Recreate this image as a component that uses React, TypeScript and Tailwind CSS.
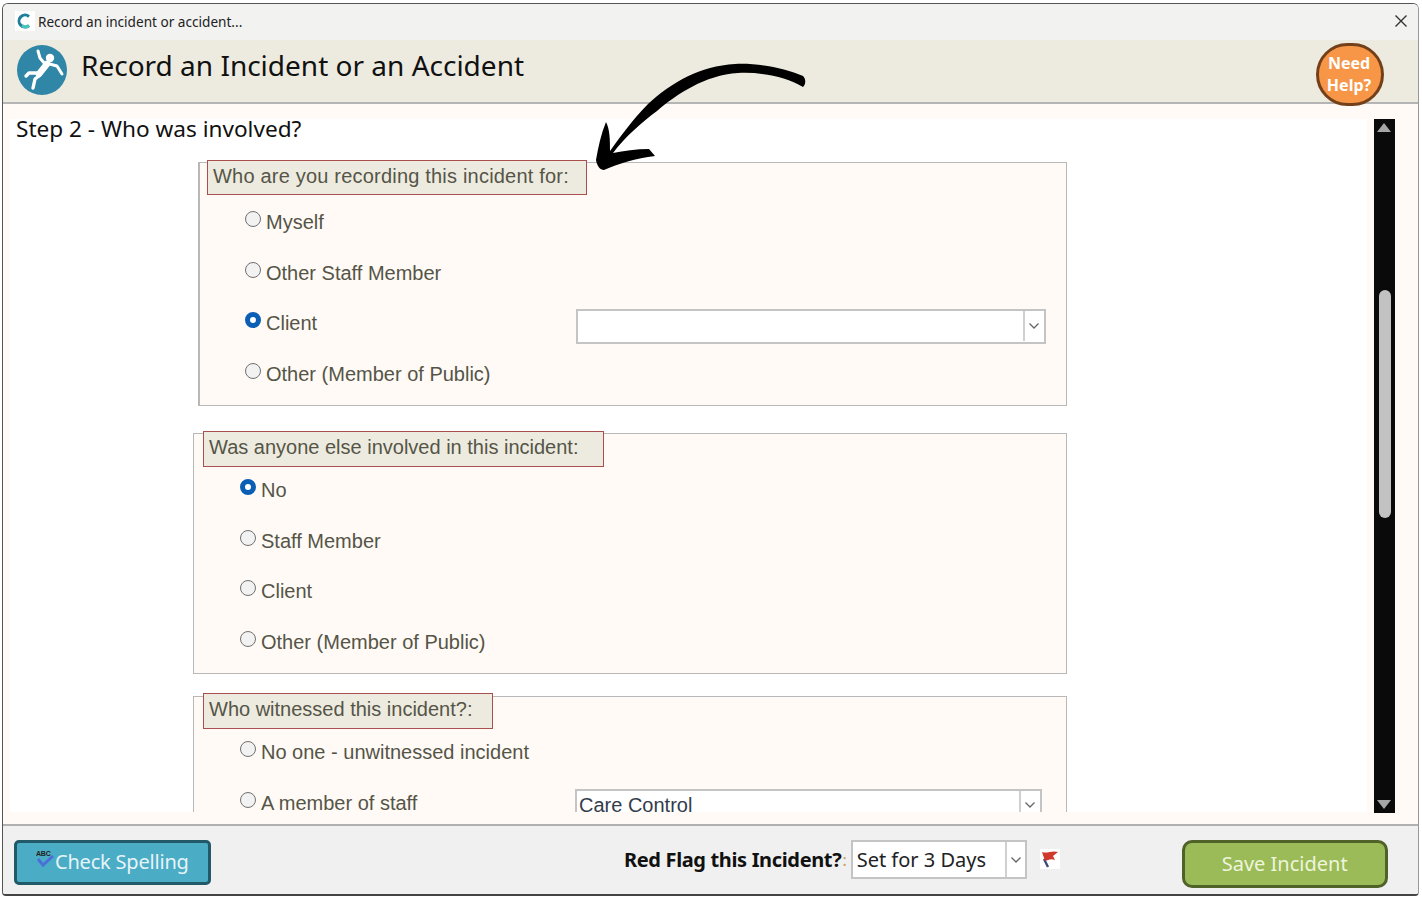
import React from 'react';

const Radio: React.FC<{ checked?: boolean }> = ({ checked }) =>
  checked ? (
    <span className="block w-4 h-4 -mt-[6px] mr-[5px] shrink-0 rounded-full border-[5px] border-[#0a5fb4] bg-white" />
  ) : (
    <span className="block w-4 h-4 -mt-[6px] mr-[5px] shrink-0 rounded-full border border-[#707070] bg-[#f2f2f2]" />
  );

const Chevron = () => (
  <svg width="12" height="8" viewBox="0 0 12 8" fill="none" stroke="#666" strokeWidth="1.3">
    <path d="M1.5 1.5 L6 6 L10.5 1.5" />
  </svg>
);

const Row: React.FC<{ label: string; checked?: boolean; labelClass?: string; children?: React.ReactNode }> = ({
  label,
  checked,
  labelClass = 'w-[331px]',
  children,
}) => (
  <div className="flex items-center h-[50.6px]">
    <div className={`flex items-center shrink-0 ${labelClass}`}>
      <Radio checked={checked} />
      <span>{label}</span>
    </div>
    {children}
  </div>
);

const Legend: React.FC<{ text: string; className: string }> = ({ text, className }) => (
  <div className={`flex items-center bg-[#edebe0] border border-[#a94f4f] pl-[5px] pb-[4px] ${className}`}>
    {text}
  </div>
);

const PersonFalling = () => (
  <svg width="50" height="50" viewBox="0 0 50 50" className="shrink-0">
    <circle cx="25" cy="25" r="25" fill="#2f86a6" />
    <circle cx="33" cy="13" r="4.2" fill="white" />
    <g fill="none" stroke="white" strokeLinecap="round" strokeLinejoin="round">
      <path d="M21 6 L23 13 L28 19" strokeWidth="3" />
      <path d="M29 18 L40 21 L45 29" strokeWidth="3" />
      <path d="M30 19 L22 29" strokeWidth="6.5" />
      <path d="M22 28 L12 28 L9 31" strokeWidth="3.4" />
      <path d="M23 30 L18 34 L16 43" strokeWidth="3.4" />
    </g>
  </svg>
);

const Arrow = () => (
  <svg className="absolute left-[590px] top-[60px] z-20" width="220" height="115" viewBox="590 60 220 115">
    <path
      fill="black"
      d="M803 76 C785 68 760 63 735 64 C700 66 672 82 648 104 C632 120 618 140 610 151 C610 140 610 130 606 122 C601 134 598 148 596 160 C597 166 600 170 604 170 C618 164 636 158 655 156 L649 149 C636 149 624 151 613 153 C625 137 642 122 657 111 C677 94 705 75 738 73 C760 72 785 76 803 87 C806 84 806 79 803 76 Z"
    />
  </svg>
);

export default function App() {
  return (
    <div className="relative w-[1422px] h-[897px] bg-white pt-[3px] pr-[3px] pb-[1px] pl-[2px] overflow-hidden font-['Liberation_Sans',sans-serif]">
      <div className="flex flex-col h-full rounded-t-[6px] rounded-b-[4px] border-t border-l border-[#555] border-r border-r-[#999] border-b-2 border-b-[#444] overflow-hidden">
        {/* title bar */}
        <div className="flex items-center h-[36px] shrink-0 bg-[#f2f3f1] pl-[12px] pr-[10px] font-['Noto_Sans',sans-serif] text-[13.6px] text-[#222]">
          <svg width="20" height="20" viewBox="0 0 20 20" className="mr-[3px] -mt-[2px] bg-white">
            <path d="M14 5.5 A6 6 0 1 0 14 14.5" fill="none" stroke="#1f7f9c" strokeWidth="3" />
            <path d="M7 14.5 A6 6 0 0 0 14 14.5" fill="none" stroke="#45c7bd" strokeWidth="3" />
          </svg>
          <span>Record an incident or accident...</span>
          <svg className="ml-auto -mt-[2px]" width="14" height="14" viewBox="0 0 14 14" stroke="#333" strokeWidth="1.4">
            <path d="M1.5 1.5 L12.5 12.5 M12.5 1.5 L1.5 12.5" />
          </svg>
        </div>

        {/* header */}
        <div className="relative z-10 flex items-start h-[64px] shrink-0 bg-[#edebe0] border-b-2 border-[#b5b5b5] pl-[14px] pr-[34px] font-['Noto_Sans',sans-serif]">
          <div className="mt-[5px] mr-[14px]">
            <PersonFalling />
          </div>
          <span className="mt-[3px] text-[28px] leading-[44px] text-[#111]">
            Record an Incident or an Accident
          </span>
          <div className="ml-auto mt-[3px] flex items-center justify-center w-[68px] h-[63px] shrink-0 rounded-full bg-[#f79646] border-[3px] border-[#74401a] pb-[2px] pr-[2px] text-white text-[16px] leading-[22px] font-bold text-center">
            Need
            <br />
            Help?
          </div>
        </div>

        {/* body */}
        <div className="flex flex-1 min-h-0 bg-[#fffaf6] pt-[15px] pb-[11px] pl-[7px]">
          <div className="w-[1357px] shrink-0 mb-[1px] bg-white overflow-hidden text-[20px] text-[#555547]">
            <div className="pl-[6px] h-[27px] mb-[16px] font-['Noto_Sans',sans-serif] text-[22.6px] leading-[20px] text-[#111]">
              Step 2 - Who was involved?
            </div>

            <div className="ml-[188px] w-[869px] h-[244px] border border-[#b8b8b8] border-l-2 bg-[#fffaf6] pl-[45px]">
              <Legend
                text="Who are you recording this incident for:"
                className="w-[380px] h-[35px] -ml-[38px] -mt-[3px] mb-[2px] tracking-[0.2px]"
              />
              <Row label="Myself" />
              <Row label="Other Staff Member" />
              <Row label="Client" checked>
                <div className="flex justify-end items-center w-[470px] h-[35px] mt-[6px] bg-white border-2 border-[#c4c4c4] pr-[1px]">
                  <span className="flex items-center justify-center w-[20px] h-[30px] border-l-2 border-[#d0d0d0]">
                    <Chevron />
                  </span>
                </div>
              </Row>
              <Row label="Other (Member of Public)" />
            </div>

            <div className="mt-[27px] ml-[183px] w-[874px] h-[241px] border border-[#b8b8b8] bg-[#fffaf6] pl-[46px]">
              <Legend
                text="Was anyone else involved in this incident:"
                className="w-[401px] h-[36px] -ml-[37px] -mt-[3px] mb-[-2px]"
              />
              <Row label="No" checked />
              <Row label="Staff Member" />
              <Row label="Client" />
              <Row label="Other (Member of Public)" />
            </div>

            <div className="mt-[22px] ml-[183px] w-[874px] h-[200px] border border-[#b8b8b8] bg-[#fffaf6] pl-[46px]">
              <Legend
                text="Who witnessed this incident?:"
                className="w-[290px] h-[36px] -ml-[37px] -mt-[4px] mb-[-2px]"
              />
              <Row label="No one - unwitnessed incident" />
              <Row label="A member of staff" labelClass="w-[335px]">
                <div className="flex justify-between items-start w-[467px] h-[35px] mt-[8px] bg-white border-2 border-[#c4c4c4] pl-[2px] pr-[1px] pt-[5px] leading-[18px] text-[#333c4a]">
                  Care Control
                  <span className="flex items-center justify-center w-[20px] h-[27px] -mt-[5px] border-l-2 border-[#d0d0d0]">
                    <Chevron />
                  </span>
                </div>
              </Row>
            </div>
          </div>

          {/* scrollbar */}
          <div className="relative w-[21px] ml-[7px] shrink-0 bg-[#0a0a0a]">
            <span className="absolute left-[3px] top-[4px] w-0 h-0 border-l-[7px] border-r-[7px] border-b-[9px] border-l-transparent border-r-transparent border-b-[#a6a6a6]" />
            <span className="absolute left-[5px] top-[171px] w-[12px] h-[228px] rounded-full bg-[#c2c2c2]" />
            <span className="absolute left-[3px] bottom-[4px] w-0 h-0 border-l-[7px] border-r-[7px] border-t-[9px] border-l-transparent border-r-transparent border-t-[#a6a6a6]" />
          </div>
        </div>

        {/* footer */}
        <div className="flex items-start h-[70px] shrink-0 bg-[#f0f0f0] border-t-2 border-[#b0b0b0] pt-[14px] pl-[11px] font-['Noto_Sans',sans-serif]">
          <div className="flex items-center w-[197px] h-[45px] rounded-[5px] bg-[#4bacc6] border-[3px] border-[#215968] text-[#e6f4f8] text-[20px] tracking-[-0.2px] pl-[18px] pb-[1px] shrink-0">
            <svg width="20" height="24" viewBox="0 0 20 24" className="-mt-[4px] shrink-0">
              <text x="1" y="8" fontSize="7" fontWeight="700" fill="#222" fontFamily="Liberation Sans, sans-serif">ABC</text>
              <path d="M3 11 L8 17 L18 8" fill="none" stroke="#4a6fd8" strokeWidth="3" />
            </svg>
            Check Spelling
          </div>
          <div className="flex items-center ml-[413px]">
            <span className="text-[20px] font-bold text-[#111] tracking-[-0.35px] whitespace-nowrap">Red Flag this Incident?</span>
            <span className="text-[16px] text-[#c99a5a] ml-[1px] mr-[4px]">:</span>
            <div className="flex items-center justify-between w-[176px] h-[39px] bg-white border-2 border-[#c4c4c4] pl-[4px] text-[20px] text-[#222]">
              Set for 3 Days
              <span className="flex items-center justify-center w-[20px] h-full border-l-2 border-[#d0d0d0]">
                <Chevron />
              </span>
            </div>
            <svg width="20" height="20" viewBox="0 0 20 20" className="ml-[13px] -mt-[1px] bg-white">
              <path d="M8 18 L4 10" stroke="#3c4a7a" strokeWidth="2.4" />
              <path d="M2 3 C7 5 12 1 18 3 L13 7 L15 11 C11 9 8 11 5 12 Z" fill="#cf3a2c" />
            </svg>
          </div>
          <div className="flex items-center justify-center w-[206px] h-[48px] ml-[122px] shrink-0 rounded-[10px] bg-[#9bbb59] border-[3px] border-[#4f6228] text-[20px] text-[#eef5dc]">
            Save Incident
          </div>
        </div>
      </div>
      <Arrow />
    </div>
  );
}
